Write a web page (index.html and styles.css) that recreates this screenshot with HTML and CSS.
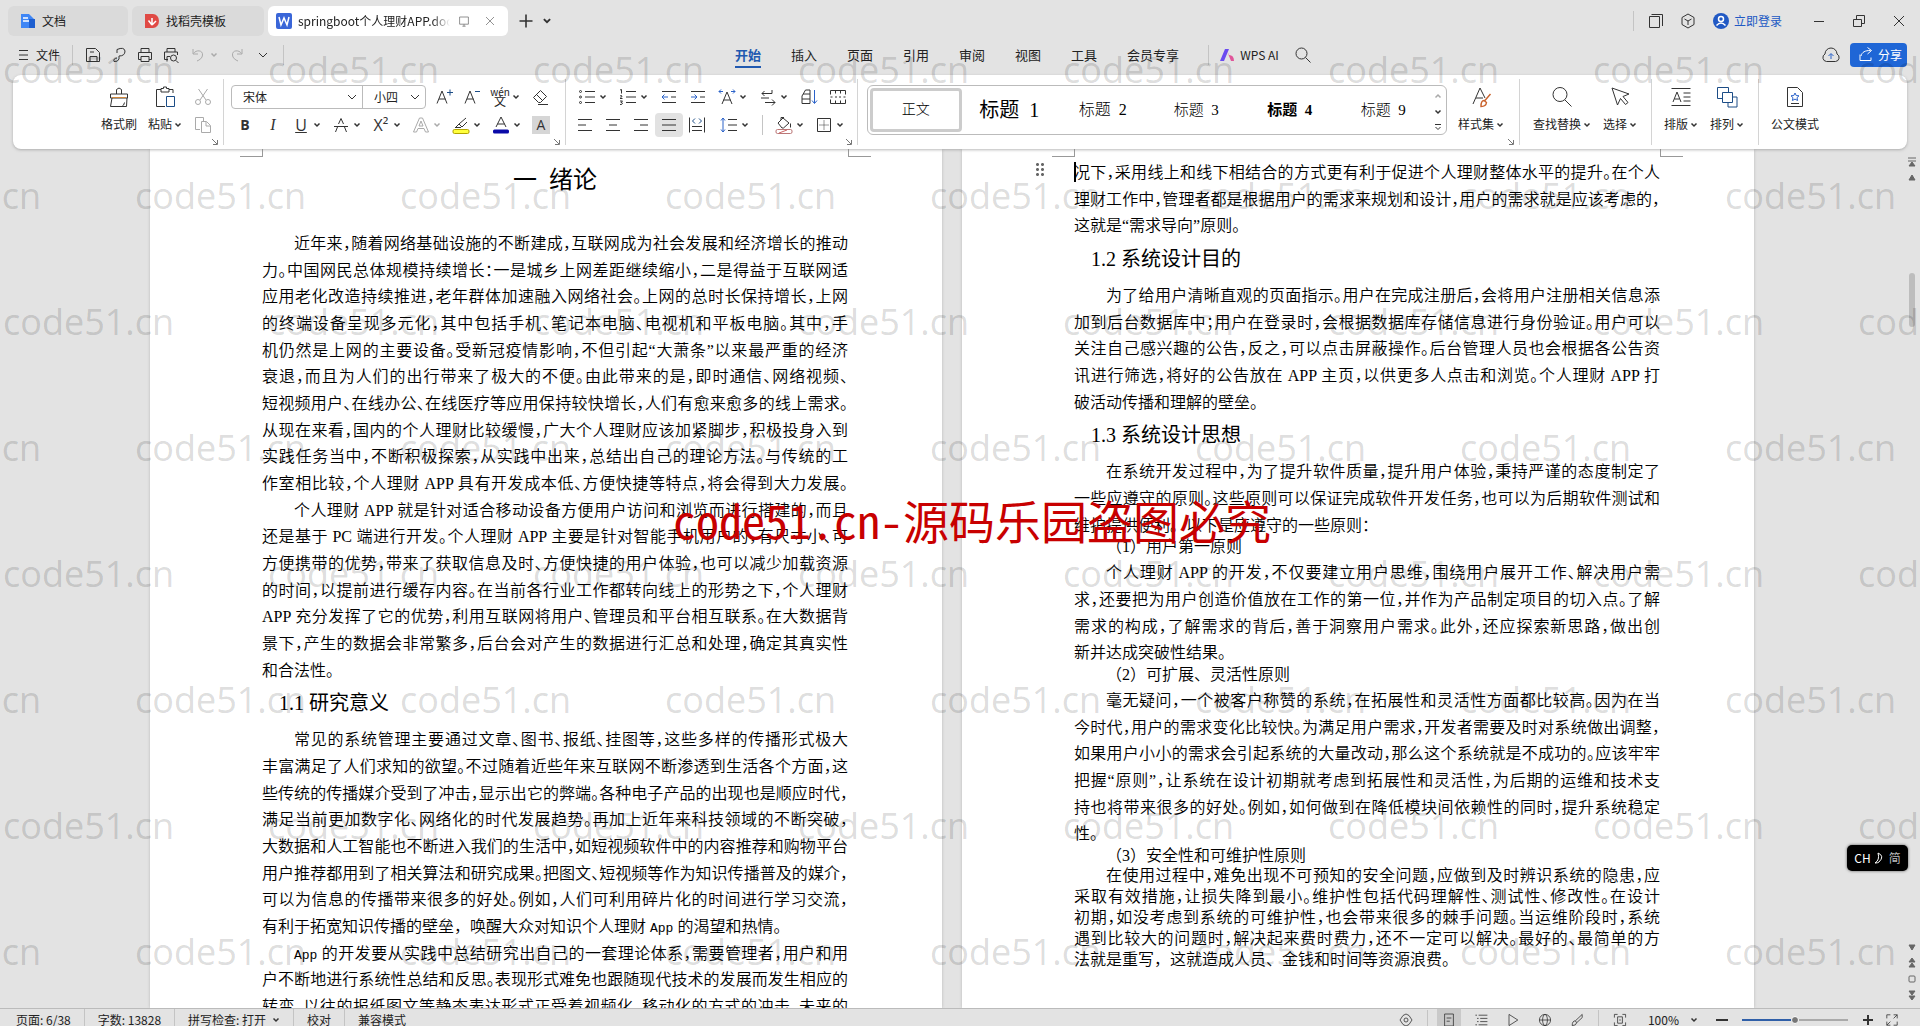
FILE: index.html
```html
<!DOCTYPE html>
<html lang="zh-CN">
<head>
<meta charset="utf-8">
<title>springboot个人理财APP.docx</title>
<link rel="stylesheet" href="styles.css">
</head>
<body>
<svg class="defs" aria-hidden="true">
  <symbol id="caret" viewBox="0 0 8 8"><path d="M1.5 2.5 4 5l2.500-2.500" stroke-width="1.500"/></symbol>
  <symbol id="chev" viewBox="0 0 12 12"><path d="m2 4 4 4 4-4"/></symbol>
  <symbol id="launch" viewBox="0 0 8 8"><path d="m1 1 5 5M6.500 2v4.500H2"/></symbol>
  <symbol id="burger" viewBox="0 0 20 20"><path d="M5 5.500h9M5 10h9M5 14.500h9"/></symbol>
  <symbol id="save" viewBox="0 0 20 20"><path d="M3.500 3.500h9l4 4v9h-13zM7 16.500v-5h7v5M7 7h4"/></symbol>
  <symbol id="output" viewBox="0 0 20 20"><path d="M8 8V4.500q7-3 8 1.500 0 5-6 5v3q-1 3-5 2.500-1-3 3-3.500"/></symbol>
  <symbol id="print" viewBox="0 0 20 20"><path d="M6 7.500v-4h8v4M6 14.500H3.500v-7h13v7H14M6 11.500h8v5H6z"/></symbol>
  <symbol id="preview" viewBox="0 0 20 20"><path d="M6 7v-3.500h8V7M7 14.500H3.500V7h13v3M6 16.500v-5h3"/><circle cx="12.500" cy="13" r="3"/><path d="m15 15.500 2.500 2.500"/></symbol>
  <symbol id="undo" viewBox="0 0 20 20"><path d="M5 4v5h5M5.500 8.500C8 4.500 15 5 14.500 10c0 3-3 5-5.500 6"/></symbol>
  <symbol id="redo" viewBox="0 0 20 20"><path d="M15 4v5h-5M14.500 8.500C12 4.500 5 5 5.500 10c0 3 3 5 5.500 6"/></symbol>
  <symbol id="search" viewBox="0 0 20 20"><circle cx="8.500" cy="8.500" r="5.500"/><path d="m12.500 12.500 5 5"/></symbol>
  <symbol id="plus" viewBox="0 0 20 20"><path d="M10 3.500v13M3.500 10h13" stroke-width="1.600"/></symbol>
  <symbol id="close" viewBox="0 0 20 20"><path d="m5 5 10 10M15 5 5 15"/></symbol>
  <symbol id="min" viewBox="0 0 20 20"><path d="M5 10.500h10"/></symbol>
  <symbol id="restore" viewBox="0 0 20 20"><path d="M4.500 8.500h8v7h-8zM7.500 8.500v-4h8v8h-3"/></symbol>
  <symbol id="doc2" viewBox="0 0 20 20"><path d="M3.500 5.500h10v11h-10zM5.500 3.500h11v11.500"/></symbol>
  <symbol id="cube" viewBox="0 0 20 20"><path d="m10 3 6 3.500v7L10 17l-6-3.500v-7zM6.500 8l3.500 2 3.500-2M10 10v4"/></symbol>
  <symbol id="monitor" viewBox="0 0 20 20"><path d="M4.500 5h11v9h-11zM8 16.500h4M10 14v2.500"/></symbol>
  <symbol id="cloud" viewBox="0 0 20 20"><path d="M5.500 16.500a4 4 0 0 1-1.500-7.500 6 6 0 0 1 12 0 4 4 0 0 1-1.500 7.500z"/><path class="blue" d="M10 14V9M7.500 11 10 8.500l2.500 2.500"/></symbol>
  <symbol id="share" viewBox="0 0 20 20"><path d="M4 9.500v6h11v-3M5 11c1-4 4-5.500 9.500-5.500M11.500 2.500l4 3-4 3.500"/></symbol>
  <symbol id="brushpot" viewBox="0 0 24 24"><path d="M9.500 9V4.500q2.500-3 5 0V9M3.500 9h17v4h-17zM5 13l-1.500 8.500h16L20 13M15 21.500q2-1 2.500-4"/><path d="M5 12.500h14" stroke="#d0873a"/></symbol>
  <symbol id="paste" viewBox="0 0 24 24"><path d="M8 4.500H3.500v17H12M16 4.500h4V8M8 7V3.500h2.500V2h3v1.500H16V7z"/><path class="navy" d="M13.500 11.500h8v10h-8z"/></symbol>
  <symbol id="cut" viewBox="0 0 20 20"><path d="m5.500 2 7.500 11M14.500 2 7 13"/><circle cx="5" cy="15" r="2.500"/><circle cx="15" cy="15" r="2.500"/></symbol>
  <symbol id="copy" viewBox="0 0 20 20"><path d="M7 14.500H2.500v-12h8V6M8.500 6.500h5l4 4v7h-9zM13 7v4h4"/></symbol>
  <symbol id="aplus" viewBox="0 0 20 20"><path d="M3 16.500 8 4l5 12.500M5 12h6.500"/><path class="navy" d="M13 5.500h6M16 2.500v6"/></symbol>
  <symbol id="aminus" viewBox="0 0 20 20"><path d="M3 16.500 8 4l5 12.500M5 12h6.500"/><path class="navy" d="M13 4.500h5"/></symbol>
  <symbol id="eraser" viewBox="0 0 20 20"><path d="m3.500 10.500 7-7 6 6-6 6H8.500zM6.500 7.500l6 6M8 17.500h10"/></symbol>
  <symbol id="strike" viewBox="0 0 20 20"><path d="M3 11.500h14M7.500 9 10 3.500 12.500 9M4.500 17 6.500 12M15.500 17l-2-5"/></symbol>
  <symbol id="aout" viewBox="0 0 20 20"><path d="M2.500 17 8.500 3h3l6 14h-3L13 13.500H7L5.500 17zM8 11h4l-2-5z"/></symbol>
  <symbol id="hilite" viewBox="0 0 20 20"><path d="m5 12 3-3 7-6M8 9l3 3 5-5M4 12.500h6"/><rect x="2" y="14.500" width="16" height="4" rx="1.500" fill="#ffff3c" stroke="#b3a400"/></symbol>
  <symbol id="fcolor" viewBox="0 0 20 20"><path d="M5 12 10 2l5 10M6.500 9h7"/><rect x="2" y="14.500" width="16" height="4" rx="1.500" fill="#0a0aa8" stroke="none"/></symbol>
  <symbol id="bullets" viewBox="0 0 20 20"><path d="M8 4.500h10M8 10h10M8 15.500h10"/><circle cx="3.500" cy="4.500" r="1"/><circle cx="3.500" cy="10" r="1"/><circle cx="3.500" cy="15.500" r="1"/></symbol>
  <symbol id="numbers" viewBox="0 0 20 20"><path d="M8 4.500h10M8 10h10M8 15.500h10M2 3l1.500-.5v4M2 9q2-1 2 0t-2 2.500h2.500M2 14h2.500L3 15.500q1.500 0 1.500 1t-2.500 1"/></symbol>
  <symbol id="outdent" viewBox="0 0 20 20"><path d="M3 4.500h14M12 10h5M3 15.500h14"/><path class="blue" d="M3 10h6M5.500 7.500 3 10l2.500 2.500"/></symbol>
  <symbol id="indent" viewBox="0 0 20 20"><path d="M3 4.500h14M12 10h5M3 15.500h14"/><path class="blue" d="M3 10h6M6.500 7.500 9 10l-2.500 2.500"/></symbol>
  <symbol id="awide" viewBox="0 0 20 20"><path d="m5 17 5-12 5 12M6.500 13h7"/><path class="blue" d="M6 4.500H2M4 2.500l-2 2 2 2M14 4.500h4M16 2.500l2 2-2 2"/></symbol>
  <symbol id="swap" viewBox="0 0 20 20"><path d="M14 3v3.500H4M6.500 4 4 6.500 6.500 9M3 11h8M7 15.500h10M14 12.500l3 3-3 3"/></symbol>
  <symbol id="sort" viewBox="0 0 20 20"><path d="M3 9 6.500 3H11v6M4 7h7M3 16.500V12h8v4.500H3M3 9v3M11 9v3"/><path class="blue" d="M15.500 3v13M13 13.500l2.500 3 2.500-3"/></symbol>
  <symbol id="tabs" viewBox="0 0 20 20"><path d="M2.500 7.500v-4h15v4M2.500 12.500v4h15v-4M7.500 3.500v3M12.500 3.500v3M7.500 13.500v3M12.500 13.500v3M2.500 10h2M7 10h2M11 10h2M15.500 10h2"/></symbol>
  <symbol id="al" viewBox="0 0 20 20"><path d="M3 4.500h14M3 10h8M3 15.500h14"/></symbol>
  <symbol id="ac" viewBox="0 0 20 20"><path d="M3 4.500h14M6 10h8M3 15.500h14"/></symbol>
  <symbol id="ar" viewBox="0 0 20 20"><path d="M3 4.500h14M9 10h8M3 15.500h14"/></symbol>
  <symbol id="aj" viewBox="0 0 20 20"><path d="M3 4.500h14M3 10h14M3 15.500h14"/></symbol>
  <symbol id="dist" viewBox="0 0 20 20"><path d="M2.500 2.500v15M17.500 2.500v15M5 11.500h10M5 15.500h10"/><path class="navy" d="M8 3.500 5.500 6 8 8.500M12 3.500 14.500 6 12 8.500"/></symbol>
  <symbol id="lh" viewBox="0 0 20 20"><path d="M9 4.500h9M9 10h9M9 15.500h9"/><path class="blue" d="M4 3v14M2 5.500 4 3l2 2.500M2 14.500 4 17l2-2.500"/></symbol>
  <symbol id="fill" viewBox="0 0 20 20"><path d="m4 8 5-5 6 5-5.500 5H8zM7 5V2.500h3M16.500 8.500v4"/><rect x="2" y="14.500" width="16" height="4" rx="1.500" fill="#fff" stroke="#b77"/><path d="m5 18 8-3" stroke="#c66"/></symbol>
  <symbol id="border" viewBox="0 0 20 20"><path d="M3.500 3.500h13v13h-13z"/><path d="M10 5.500v9M5.500 10h9" stroke-dasharray="1 1"/></symbol>
  <symbol id="styleset" viewBox="0 0 24 24"><path d="m4 19 7-16 5 10M7 13h7"/><path d="m21.500 9-6 7M15 15.500q-3 0-3 6 5 0 5.500-4z" stroke="#c9622c" stroke-width="1.400"/></symbol>
  <symbol id="bigfind" viewBox="0 0 24 24"><circle cx="10" cy="9.500" r="7"/><path d="m15 15 6.500 6.500"/></symbol>
  <symbol id="pointer" viewBox="0 0 24 24"><path d="m4 3 5.500 17 3-6.500 5 6 2.500-2-5-6 6-2.500z"/></symbol>
  <symbol id="layout" viewBox="0 0 24 24"><path d="M2.500 3.500h19M2.500 20.500h19M4 17 8 7l4 10M5.500 14h5M14.500 8h7M14.500 12h7M14.500 16h7"/></symbol>
  <symbol id="arrange" viewBox="0 0 24 24"><path class="navy" d="M7 13.500H2.500v-11h11V7M7.500 7.500h10v10h-10zM18 12h4v10h-9v-4"/></symbol>
  <symbol id="official" viewBox="0 0 24 24"><path d="M4.500 2.500h10l5 5v14h-15zM8 18.500h8"/><path class="blue" d="m12 8 1.200 2.500 2.800.3-2 1.900.6 2.800-2.600-1.400-2.600 1.400.6-2.800-2-1.900 2.800-.3z"/></symbol>
  <symbol id="eye" viewBox="0 0 20 20"><path d="M2.500 10q7.500-15 15 0-7.500 15-15 0z"/><circle cx="10" cy="10" r="2.500"/></symbol>
  <symbol id="pageview" viewBox="0 0 20 20"><path d="M4.500 2.500h11v15h-11zM7 7.500h6M7 11.500h4"/></symbol>
  <symbol id="outline" viewBox="0 0 20 20"><path d="M3 4h2M7 4h11M5 8h2M9 8h9M5 12h2M9 12h9M3 16h2M7 16h11"/></symbol>
  <symbol id="play" viewBox="0 0 20 20"><path d="m5 3 11 7-11 7z"/></symbol>
  <symbol id="globe" viewBox="0 0 20 20"><circle cx="10" cy="10" r="7"/><ellipse cx="10" cy="10" rx="3" ry="7"/><path d="M3 10h14"/></symbol>
  <symbol id="pen" viewBox="0 0 20 20"><path d="m16.500 3-8.500 8 1.500 2.500 7-6.500zM8 11q-4 0-4 6 5 0 5.500-3.500"/></symbol>
  <symbol id="fit" viewBox="0 0 20 20"><path d="M3 7V3h4M13 3h4v4M17 13v4h-4M7 17H3v-4M7 6h6v8H7zM9 10h2"/></symbol>
  <symbol id="full" viewBox="0 0 20 20"><path d="M3.500 8V3.500H8M12 3.500h4.500V8M16.500 12v4.500H12M8 16.500H3.500V12M3.500 16.500 8 12M16.500 3.500 12 8"/></symbol>
</svg>

<header class="titlebar">
  <div class="tabs">
    <button class="tab tab-home"><svg class="logo" viewBox="0 0 16 16"><path d="M1 1h8l6 6v8H1z" fill="#3f86f5"/><path d="M9 6h6v9H9z" fill="#1e5fd0"/><path d="M3 5h5M3 8h6" stroke="#fff" stroke-width="1.500"/></svg>文档</button>
    <button class="tab tab-find"><svg class="logo" viewBox="0 0 16 16"><path d="M1 1h8a6 7 0 0 1 0 14H1z" fill="#e04a45"/><path d="M8 12V5M8 12 4.500 7.500M8 12l4-4" stroke="#fff" stroke-width="1.500" fill="none"/></svg>找稻壳模板</button>
    <div class="tab tab-active"><svg class="logo" viewBox="0 0 16 16"><rect width="16" height="16" rx="2" fill="#3a66d8"/><path d="m3 4 2 8 3-7 3 7 2-8" stroke="#fff" stroke-width="1.500" fill="none"/></svg><span class="name">springboot个人理财APP.docx</span><svg class="i16 dim"><use href="#monitor"/></svg><button class="bare" aria-label="关闭标签"><svg class="i16 dim"><use href="#close"/></svg></button></div>
  </div>
  <button class="bare plus" aria-label="新建"><svg class="i20"><use href="#plus"/></svg></button>
  <button class="bare" aria-label="标签列表"><svg class="i10"><use href="#caret"/></svg></button>
  <div class="winctl">
    <i class="vline"></i>
    <button class="bare" aria-label="窗口"><svg class="i20"><use href="#doc2"/></svg></button>
    <button class="bare" aria-label="应用"><svg class="i20"><use href="#cube"/></svg></button>
    <button class="bare login"><svg class="i16" viewBox="0 0 16 16"><circle cx="8" cy="8" r="8" fill="#2159c4" stroke="none"/><circle cx="8" cy="6" r="2.500" stroke="#fff" stroke-width="1.500"/><path d="M3.500 12.500q4.500-5 9 0" stroke="#fff" stroke-width="1.500"/></svg>立即登录</button>
    <button class="bare win" aria-label="最小化"><svg class="i20"><use href="#min"/></svg></button>
    <button class="bare win" aria-label="还原"><svg class="i20"><use href="#restore"/></svg></button>
    <button class="bare win" aria-label="关闭"><svg class="i20"><use href="#close"/></svg></button>
  </div>
</header>

<div class="menubar">
  <div class="quick">
    <button class="bare file"><svg class="i20"><use href="#burger"/></svg>文件</button>
    <i class="vline"></i>
    <button class="bare q" aria-label="保存"><svg class="i20"><use href="#save"/></svg></button>
    <button class="bare q" aria-label="输出"><svg class="i20"><use href="#output"/></svg></button>
    <button class="bare q" aria-label="打印"><svg class="i20"><use href="#print"/></svg></button>
    <button class="bare q" aria-label="打印预览"><svg class="i20"><use href="#preview"/></svg></button>
    <button class="bare dd off" aria-label="撤销"><svg class="i20"><use href="#undo"/></svg><svg class="i8"><use href="#caret"/></svg></button>
    <button class="bare q off" aria-label="恢复"><svg class="i20"><use href="#redo"/></svg></button>
    <button class="bare q" aria-label="更多"><svg class="i12"><use href="#chev"/></svg></button>
    <i class="vline"></i>
  </div>
  <nav class="menu">
    <button class="on">开始</button><button>插入</button><button>页面</button><button>引用</button><button>审阅</button><button>视图</button><button>工具</button><button>会员专享</button>
  </nav>
  <i class="vline"></i>
  <button class="bare ai"><svg class="i16" viewBox="0 0 16 16"><path d="M1 14 6 2h4L5 14z" fill="#6a4cf0" stroke="none"/><path d="m8 4 4 10h3q0-6-5-6z" fill="#e0559a" stroke="none"/></svg>WPS AI</button>
  <button class="bare" aria-label="搜索"><svg class="i20"><use href="#search"/></svg></button>
  <div class="right">
    <button class="bare" aria-label="云同步"><svg class="i20"><use href="#cloud"/></svg></button>
    <button class="share"><svg class="i20"><use href="#share"/></svg>分享</button>
  </div>
</div>

<section class="ribbon">
  <div class="group clip">
    <button class="big w44"><svg class="i24"><use href="#brushpot"/></svg><span>格式刷</span></button>
    <button class="big w44"><svg class="i24"><use href="#paste"/></svg><span>粘贴<svg class="i8"><use href="#caret"/></svg></span></button>
    <div class="rows">
      <button class="ic off" aria-label="剪切"><svg class="i20"><use href="#cut"/></svg></button>
      <button class="ic off" aria-label="复制"><svg class="i20"><use href="#copy"/></svg></button>
    </div>
    <svg class="launch"><use href="#launch"/></svg>
  </div>
  <div class="group font">
    <div class="rows">
      <div class="row">
        <div class="selects">
          <label class="pick face"><select aria-label="字体"><option>宋体</option></select><svg class="i12"><use href="#chev"/></svg></label>
          <label class="pick size"><select aria-label="字号"><option>小四</option></select><svg class="i12"><use href="#chev"/></svg></label>
        </div>
        <button class="ic" aria-label="增大字号"><svg class="i20"><use href="#aplus"/></svg></button>
        <button class="ic" aria-label="减小字号"><svg class="i20"><use href="#aminus"/></svg></button>
        <button class="dd" aria-label="拼音指南"><span class="wen"><small>wén</small>文</span><svg class="i8"><use href="#caret"/></svg></button>
        <button class="ic" aria-label="清除格式"><svg class="i20"><use href="#eraser"/></svg></button>
      </div>
      <div class="row">
        <button class="ic ltr b">B</button>
        <button class="ic ltr it">I</button>
        <button class="dd ltr"><span class="u">U</span><svg class="i8"><use href="#caret"/></svg></button>
        <button class="dd" aria-label="删除线"><svg class="i20"><use href="#strike"/></svg><svg class="i8"><use href="#caret"/></svg></button>
        <button class="dd ltr"><span>X²</span><svg class="i8"><use href="#caret"/></svg></button>
        <button class="dd off" aria-label="文字效果"><svg class="i20"><use href="#aout"/></svg><svg class="i8"><use href="#caret"/></svg></button>
        <button class="dd" aria-label="突出显示"><svg class="i20"><use href="#hilite"/></svg><svg class="i8"><use href="#caret"/></svg></button>
        <button class="dd" aria-label="字体颜色"><svg class="i20"><use href="#fcolor"/></svg><svg class="i8"><use href="#caret"/></svg></button>
        <button class="ic ltr"><span class="shade">A</span></button>
      </div>
    </div>
    <svg class="launch"><use href="#launch"/></svg>
  </div>
  <div class="group para">
    <div class="rows">
      <div class="row spread">
        <button class="dd" aria-label="项目符号"><svg class="i20"><use href="#bullets"/></svg><svg class="i8"><use href="#caret"/></svg></button>
        <button class="dd" aria-label="编号"><svg class="i20"><use href="#numbers"/></svg><svg class="i8"><use href="#caret"/></svg></button>
        <button class="ic" aria-label="减少缩进"><svg class="i20"><use href="#outdent"/></svg></button>
        <button class="ic" aria-label="增加缩进"><svg class="i20"><use href="#indent"/></svg></button>
        <button class="dd" aria-label="中文版式"><svg class="i20"><use href="#awide"/></svg><svg class="i8"><use href="#caret"/></svg></button>
        <button class="dd" aria-label="换行"><svg class="i20"><use href="#swap"/></svg><svg class="i8"><use href="#caret"/></svg></button>
        <button class="ic" aria-label="排序"><svg class="i20"><use href="#sort"/></svg></button>
        <button class="ic" aria-label="制表位"><svg class="i20"><use href="#tabs"/></svg></button>
      </div>
      <div class="row">
        <button class="ic" aria-label="左对齐"><svg class="i20"><use href="#al"/></svg></button>
        <button class="ic" aria-label="居中"><svg class="i20"><use href="#ac"/></svg></button>
        <button class="ic" aria-label="右对齐"><svg class="i20"><use href="#ar"/></svg></button>
        <button class="ic pressed" aria-label="两端对齐"><svg class="i20"><use href="#aj"/></svg></button>
        <button class="ic" aria-label="分散对齐"><svg class="i20"><use href="#dist"/></svg></button>
        <button class="dd lead" aria-label="行距"><svg class="i20"><use href="#lh"/></svg><svg class="i8"><use href="#caret"/></svg></button>
        <i class="vline"></i>
        <button class="dd" aria-label="底纹"><svg class="i20"><use href="#fill"/></svg><svg class="i8"><use href="#caret"/></svg></button>
        <button class="dd" aria-label="边框"><svg class="i20"><use href="#border"/></svg><svg class="i8"><use href="#caret"/></svg></button>
      </div>
    </div>
    <svg class="launch"><use href="#launch"/></svg>
  </div>
  <div class="group styles">
    <div class="gallery">
      <button class="style sel">正文</button>
      <button class="style h1">标题 &nbsp;1</button>
      <button class="style h2">标题 &nbsp;2</button>
      <button class="style">标题 &nbsp;3</button>
      <button class="style h4">标题 &nbsp;4</button>
      <button class="style">标题 &nbsp;9</button>
      <div class="spin"><svg class="i8 off flip"><use href="#caret"/></svg><svg class="i8"><use href="#caret"/></svg><svg class="i8" viewBox="0 0 8 8"><path d="M1 1.500h6M1.500 4 4 6.500 6.500 4"/></svg></div>
    </div>
    <button class="big w60"><svg class="i24"><use href="#styleset"/></svg><span>样式集<svg class="i8"><use href="#caret"/></svg></span></button>
    <svg class="launch"><use href="#launch"/></svg>
  </div>
  <div class="group find">
    <button class="big w68"><svg class="i24"><use href="#bigfind"/></svg><span>查找替换<svg class="i8"><use href="#caret"/></svg></span></button>
    <button class="big w44"><svg class="i24"><use href="#pointer"/></svg><span>选择<svg class="i8"><use href="#caret"/></svg></span></button>
  </div>
  <div class="group arrange">
    <button class="big w44"><svg class="i24"><use href="#layout"/></svg><span>排版<svg class="i8"><use href="#caret"/></svg></span></button>
    <button class="big w44"><svg class="i24"><use href="#arrange"/></svg><span>排列<svg class="i8"><use href="#caret"/></svg></span></button>
  </div>
  <div class="group last">
    <button class="big w60"><svg class="i24"><use href="#official"/></svg><span>公文模式</span></button>
  </div>
</section>

<main class="canvas">
  <div class="pages">
    <article class="page">
      <i class="corner tl"></i><i class="corner tr"></i>
      <h1>一 &nbsp;绪论</h1>
      <p><span>近年来，随着网络基础设施的不断建成，互联网成为社会发展和经济增长的推动</span><span>力。中国网民总体规模持续增长：一是城乡上网差距继续缩小，二是得益于互联网适</span><span>应用老化改造持续推进，老年群体加速融入网络社会。上网的总时长保持增长，上网</span><span>的终端设备呈现多元化，其中包括手机、笔记本电脑、电视机和平板电脑。其中，手</span><span>机仍然是上网的主要设备。受新冠疫情影响，不但引起“大萧条”以来最严重的经济</span><span>衰退，而且为人们的出行带来了极大的不便。由此带来的是，即时通信、网络视频、</span><span>短视频用户、在线办公、在线医疗等应用保持较快增长，人们有愈来愈多的线上需求。</span><span>从现在来看，国内的个人理财比较缓慢，广大个人理财应该加紧脚步，积极投身入到</span><span>实践任务当中，不断积极探索，从实践中出来，总结出自己的理论方法。与传统的工</span><span class="fit">作室相比较，个人理财 APP 具有开发成本低、方便快捷等特点，将会得到大力发展。</span></p>
      <p><span>个人理财 APP 就是针对适合移动设备方便用户访问和浏览而进行搭建的，而且</span><span>还是基于 PC 端进行开发。个人理财 APP 主要是针对智能手机用户的，有尺寸小、可</span><span>方便携带的优势，带来了获取信息及时、方便快捷的用户体验，也可以减少加载资源</span><span>的时间，以提前进行缓存内容。在当前各行业工作都转向线上的形势之下，个人理财</span><span>APP 充分发挥了它的优势，利用互联网将用户、管理员和平台相互联系。在大数据背</span><span>景下，产生的数据会非常繁多，后台会对产生的数据进行汇总和处理，确定其真实性</span><span>和合法性。</span></p>
      <h2>1.1 研究意义</h2>
      <p><span>常见的系统管理主要通过文章、图书、报纸、挂图等，这些多样的传播形式极大</span><span>丰富满足了人们求知的欲望。不过随着近些年来互联网不断渗透到生活各个方面，这</span><span>些传统的传播媒介受到了冲击，显示出它的弊端。各种电子产品的出现也是顺应时代，</span><span>满足当前更加数字化、网络化的时代发展趋势。再加上近年来科技领域的不断突破，</span><span>大数据和人工智能也不断进入我们的生活中，如短视频软件中的内容推荐和购物平台</span><span>用户推荐都用到了相关算法和研究成果。把图文、短视频等作为知识传播普及的媒介，</span><span>可以为信息的传播带来很多的好处。例如，人们可利用碎片化的时间进行学习交流，</span><span>有利于拓宽知识传播的壁垒，唤醒大众对知识个人理财 <code>App</code> 的渴望和热情。</span></p>
      <p><span><code>App</code> 的开发要从实践中总结研究出自己的一套理论体系，需要管理者，用户和用</span><span>户不断地进行系统性总结和反思。表现形式难免也跟随现代技术的发展而发生相应的</span><span class="fit">转变，以往的报纸图文等静态表达形式正受着视频化、移动化的方式的冲击，未来的</span></p>
    </article>
    <article class="page">
      <i class="corner tl"></i><i class="corner tr"></i><i class="grip"></i><i class="cursor"></i>
      <p class="cont"><span>况下，采用线上和线下相结合的方式更有利于促进个人理财整体水平的提升。在个人</span><span>理财工作中，管理者都是根据用户的需求来规划和设计，用户的需求就是应该考虑的，</span><span>这就是“需求导向”原则。</span></p>
      <h2>1.2 系统设计目的</h2>
      <p><span>为了给用户清晰直观的页面指示。用户在完成注册后，会将用户注册相关信息添</span><span>加到后台数据库中；用户在登录时，会根据数据库存储信息进行身份验证。用户可以</span><span>关注自己感兴趣的公告，反之，可以点击屏蔽操作。后台管理人员也会根据各公告资</span><span>讯进行筛选，将好的公告放在 APP 主页，以供更多人点击和浏览。个人理财 APP 打</span><span>破活动传播和理解的壁垒。</span></p>
      <h2>1.3 系统设计思想</h2>
      <p><span>在系统开发过程中，为了提升软件质量，提升用户体验，秉持严谨的态度制定了</span><span>一些应遵守的原则。这些原则可以保证完成软件开发任务，也可以为后期软件测试和</span><span>维护提供便利。以下是应遵守的一些原则：</span></p>
      <h3>（1）用户第一原则</h3>
      <p><span>个人理财 APP 的开发，不仅要建立用户思维，围绕用户展开工作、解决用户需</span><span>求，还要把为用户创造价值放在工作的第一位，并作为产品制定项目的切入点。了解</span><span>需求的构成，了解需求的背后，善于洞察用户需求。此外，还应探索新思路，做出创</span><span>新并达成突破性结果。</span></p>
      <h3>（2）可扩展、灵活性原则</h3>
      <p><span>毫无疑问，一个被客户称赞的系统，在拓展性和灵活性方面都比较高。因为在当</span><span>今时代，用户的需求变化比较快。为满足用户需求，开发者需要及时对系统做出调整，</span><span>如果用户小小的需求会引起系统的大量改动，那么这个系统就是不成功的。应该牢牢</span><span>把握“原则”，让系统在设计初期就考虑到拓展性和灵活性，为后期的运维和技术支</span><span>持也将带来很多的好处。例如，如何做到在降低模块间依赖性的同时，提升系统稳定</span><span>性。</span></p>
      <h3>（3）安全性和可维护性原则</h3>
      <p class="tight"><span>在使用过程中，难免出现不可预知的安全问题，应做到及时辨识系统的隐患，应</span><span>采取有效措施，让损失降到最小。维护性包括代码理解性、测试性、修改性。在设计</span><span>初期，如没考虑到系统的可维护性，也会带来很多的棘手问题。当运维阶段时，系统</span><span>遇到比较大的问题时，解决起来费时费力，还不一定可以解决。最好的、最简单的方</span><span>法就是重写，这就造成人员、金钱和时间等资源浪费。</span></p>
    </article>
  </div>
  <div class="scroll">
    <svg class="mark" viewBox="0 0 10 10"><path d="M1 1h8M1 4h8M2 9l3-4 3 4z"/></svg>
    <svg class="mark" viewBox="0 0 10 10"><path d="m5 2 3 5H2z"/></svg>
    <i class="thumb"></i>
    <svg class="mark down" viewBox="0 0 10 10"><path d="M2 3h6L5 8z"/></svg>
    <svg class="mark" viewBox="0 0 10 10"><path d="m5 0 3 4H2zM5 5l3 4H2z"/></svg>
    <svg class="mark ring" viewBox="0 0 10 10"><rect x="2" y="2" width="6" height="6" rx="1"/></svg>
    <svg class="mark" viewBox="0 0 10 10"><path d="M5 5 2 1h6zM5 10 2 6h6z"/></svg>
  </div>
</main>

<footer class="status">
  <button class="bare">页面: 6/38</button><i class="vline"></i>
  <button class="bare">字数: 13828</button><i class="vline"></i>
  <button class="bare">拼写检查: 打开<svg class="i8 proof"><use href="#caret"/></svg></button><i class="vline"></i>
  <button class="bare">校对</button><i class="vline"></i>
  <button class="bare">兼容模式</button>
  <div class="views">
    <button class="bare v" aria-label="护眼"><svg class="i16"><use href="#eye"/></svg></button><i class="vline"></i>
    <button class="bare v cur" aria-label="页面视图"><svg class="i16"><use href="#pageview"/></svg></button>
    <button class="bare v" aria-label="大纲"><svg class="i16"><use href="#outline"/></svg></button>
    <button class="bare v" aria-label="阅读"><svg class="i16"><use href="#play"/></svg></button>
    <button class="bare v" aria-label="网页"><svg class="i16"><use href="#globe"/></svg></button>
    <button class="bare v" aria-label="写作"><svg class="i16"><use href="#pen"/></svg></button><i class="vline"></i>
    <button class="bare v" aria-label="适合页宽"><svg class="i16"><use href="#fit"/></svg></button>
    <button class="bare zoom">100%<svg class="i8 gap"><use href="#caret"/></svg></button>
    <button class="bare pm" aria-label="缩小"><svg class="i16 thick" viewBox="0 0 16 16"><path d="M2 8h12"/></svg></button>
    <input type="range" class="slider" min="0" max="100" value="50" aria-label="缩放">
    <button class="bare pm" aria-label="放大"><svg class="i16 thick" viewBox="0 0 16 16"><path d="M3 8h10M8 3v10"/></svg></button>
    <button class="bare v" aria-label="全屏"><svg class="i16"><use href="#full"/></svg></button>
  </div>
</footer>

<div class="ime">CH<svg class="i12" viewBox="0 0 12 12"><path d="M4 1q7 3 1 9-1 1-4 1 5-3 3-10z"/></svg><b>简</b></div>

<div class="wm" aria-hidden="true">
  <div><span>code51.cn</span><span>code51.cn</span><span>code51.cn</span><span>code51.cn</span><span>code51.cn</span><span>code51.cn</span><span>code51.cn</span><span>code51.cn</span></div>
  <div><span>code51.cn</span><span>code51.cn</span><span>code51.cn</span><span>code51.cn</span><span>code51.cn</span><span>code51.cn</span><span>code51.cn</span><span>code51.cn</span></div>
  <div><span>code51.cn</span><span>code51.cn</span><span>code51.cn</span><span>code51.cn</span><span>code51.cn</span><span>code51.cn</span><span>code51.cn</span><span>code51.cn</span></div>
  <div><span>code51.cn</span><span>code51.cn</span><span>code51.cn</span><span>code51.cn</span><span>code51.cn</span><span>code51.cn</span><span>code51.cn</span><span>code51.cn</span></div>
  <div><span>code51.cn</span><span>code51.cn</span><span>code51.cn</span><span>code51.cn</span><span>code51.cn</span><span>code51.cn</span><span>code51.cn</span><span>code51.cn</span></div>
  <div><span>code51.cn</span><span>code51.cn</span><span>code51.cn</span><span>code51.cn</span><span>code51.cn</span><span>code51.cn</span><span>code51.cn</span><span>code51.cn</span></div>
  <div><span>code51.cn</span><span>code51.cn</span><span>code51.cn</span><span>code51.cn</span><span>code51.cn</span><span>code51.cn</span><span>code51.cn</span><span>code51.cn</span></div>
  <div><span>code51.cn</span><span>code51.cn</span><span>code51.cn</span><span>code51.cn</span><span>code51.cn</span><span>code51.cn</span><span>code51.cn</span><span>code51.cn</span></div>
</div>
<div class="notice">code51.cn-源码乐园盗图必究</div>
</body>
</html>
```
FILE: styles.css
```css
* { box-sizing: border-box; }
body {
  margin: 0;
  height: 100vh;
  overflow: hidden;
  display: flex;
  flex-direction: column;
  position: relative;
  background: #e3e3e3;
  color: #222;
  font: 12px/16px "Noto Sans CJK SC", sans-serif;
}
button, select, input { font: inherit; color: inherit; }
button { border: 0; padding: 0; background: none; }
svg { fill: none; stroke: #333; flex: none; }
.blue { stroke: #2a62c9; }
.navy { stroke: #1c4d86; }
.off svg, svg.off { stroke: #aaa; }
svg.dim { stroke: #777; }
.defs { position: absolute; width: 0; height: 0; }
.i8 { width: 8px; height: 8px; }
.i10 { width: 10px; height: 10px; }
.i12 { width: 12px; height: 12px; }
.i16 { width: 16px; height: 16px; }
.i20 { width: 20px; height: 20px; }
.i24 { width: 24px; height: 24px; }
.flip { transform: rotate(180deg); }
.bare { display: flex; align-items: center; white-space: nowrap; }
.vline { width: 1px; height: 20px; background: #c4c4c4; flex: none; }

/* title bar */
.titlebar { display: flex; align-items: center; height: 41px; padding-left: 8px; flex: none; }
.tabs { display: flex; gap: 4px; }
.tab {
  display: flex;
  align-items: center;
  gap: 6px;
  height: 30px;
  padding: 0 12px;
  border-radius: 6px;
  background: #dadada;
}
.logo { width: 16px; height: 16px; stroke: none; }
.tab-home { width: 120px; }
.tab-find { width: 132px; }
.tab-active { width: 240px; padding: 0 10px 0 8px; background: #fff; }
.name { flex: 1; overflow: hidden; white-space: nowrap; mask-image: linear-gradient(90deg, #000 88%, transparent); }
.tab-active .bare { margin-left: 4px; }
.plus { margin: 0 6px 0 8px; }
.winctl { margin-left: auto; display: flex; align-items: center; gap: 12px; padding-right: 11px; }
.login { gap: 5px; color: #2159c4; margin: 0 7px 0 3px; }
.win { margin-left: 8px; }

/* menu bar */
.menubar { display: flex; align-items: center; height: 34px; padding-bottom: 6px; flex: none; }
.quick { flex: 0 0 37.5%; display: flex; align-items: center; padding-left: 14px; }
.file { gap: 2px; margin-right: 12px; }
.quick .vline { margin-right: 7px; }
.q { width: 26px; height: 24px; justify-content: center; }
.quick .vline:last-child { margin-left: 7px; }
.menu { display: flex; padding-right: 14px; }
.menu button { margin: 2px 15px 0; font-size: 13px; line-height: 22px; border-bottom: 2px solid transparent; }
.menu .on { color: #2159b0; font-weight: 700; border-color: #2159b0; }
.ai { gap: 5px; margin: 0 14px 0 10px; }
.right { margin-left: auto; display: flex; align-items: center; gap: 9px; padding-right: 13px; }
.share {
  display: flex;
  align-items: center;
  gap: 2px;
  height: 24px;
  width: 57px;
  padding-left: 6px;
  border-radius: 4px;
  background: #1f66d6;
  color: #fff;
}
.share svg { stroke: #fff; }

/* ribbon */
.ribbon {
  display: flex;
  height: 74px;
  margin: 0 13px;
  flex: none;
  background: #fff;
  border-radius: 8px;
  box-shadow: 0 1px 3px #8889;
  position: relative;
  z-index: 2;
}
.group { display: flex; position: relative; padding-top: 10px; }
.group + .group::before { content: ""; position: absolute; left: 0; top: 4px; bottom: 4px; width: 1px; background: #d4d4d4; }
.launch { position: absolute; right: 4px; bottom: 3px; width: 8px; height: 8px; stroke: #777; }
.rows { display: flex; flex-direction: column; gap: 4px; }
.row { display: flex; height: 24px; }
.ic { width: 28px; height: 24px; display: flex; align-items: center; justify-content: center; }
.dd { width: 40px; height: 24px; display: flex; align-items: center; padding-left: 4px; gap: 2px; }
.big { display: flex; flex-direction: column; align-items: center; gap: 7px; height: 54px; white-space: nowrap; }
.big .i8, .gap { margin-left: 2px; }
.w44 { width: 44px; margin-right: 2px; }
.w60 { width: 60px; }
.w68 { width: 68px; }
.clip { padding-left: 84px; width: 210px; }
.font { width: 342px; padding-left: 8px; }
.selects { display: flex; width: 195px; margin-right: 4px; border: 1px solid #bbb; border-radius: 4px; }
.pick { display: flex; align-items: center; position: relative; }
.pick select { appearance: none; border: 0; background: none; width: 100%; padding: 0 0 0 11px; }
.pick svg { position: absolute; right: 4px; }
.face { flex: 1; }
.size { width: 63px; border-left: 1px solid #bbb; }
.wen { width: 20px; font-size: 12px; line-height: 10px; text-align: center; }
.wen small { display: block; font-size: 10px; line-height: 8px; }
.ltr { font: 16px/20px "Open Sans", sans-serif; color: #333; }
.ltr > span { width: 20px; text-align: center; }
.b { font-weight: 700; font-size: 14px; }
.it { font-style: italic; font-family: "Liberation Serif", serif; }
.u { text-decoration: underline; }
.ltr .shade { background: #d6d6d6; width: 18px; line-height: 18px; font-size: 14px; }
.para { width: 292px; padding-left: 6px; }
.spread { width: 281px; padding-left: 2px; justify-content: space-between; }
.pressed { background: #e2e2e2; border-radius: 4px; }
.lead { margin-left: 4px; }
.row .vline { margin: 2px 7px; }
.styles { flex: 1; padding-left: 10px; max-width: 662px; }
.gallery { flex: 1; display: flex; height: 50px; border: 1px solid #bbb; border-radius: 6px; padding-left: 1px; }
.style { flex: 1; margin: 2px 1px; border: 3px solid transparent; font: 300 15px/20px "Liberation Serif", "Noto Sans CJK SC", serif; color: #000; white-space: nowrap; }
.sel { border-color: #ccc; border-radius: 4px; font-size: 14px; }
.h1 { font-size: 20px; font-weight: 400; }
.h2 { font-size: 16px; }
.h4 { font-weight: 700; }
.spin { width: 16px; display: flex; flex-direction: column; align-items: center; justify-content: space-between; padding: 6px 0 3px; }
.styles .big { margin: 0 8px 0 4px; }
.find { padding-left: 9px; width: 132px; }
.find .w68 { margin-right: 2px; }
.find .w44, .arrange .w44 { margin-right: 0; }
.arrange { padding-left: 8px; width: 107px; gap: 2px; }
.last { padding-left: 7px; }

/* document */
.canvas { flex: 1; min-height: 0; display: flex; overflow: hidden; }
.pages { flex: 1; display: flex; justify-content: center; gap: 20px; }
.page {
  position: relative;
  width: 792px;
  flex: none;
  min-height: 100%;
  padding: 11px 94px 0 112px;
  background: #fff;
  box-shadow: 0 0 3px #bbb;
  color: #000;
  font: 350 16px/20pt "Liberation Serif", "Noto Sans CJK SC", serif;
}
.page p { margin: 0; }
.page span { display: block; white-space: nowrap; text-align: justify; text-align-last: justify; font-feature-settings: "halt"; }
.page span:first-child { padding-left: 2em; }
.page .cont span:first-child { padding-left: 0; }
.page span:last-child { text-align-last: start; font-feature-settings: normal; }
.page span.fit { text-align-last: justify; font-feature-settings: "halt"; }
.page code { font: 13px "Liberation Mono", monospace; }
.page h1 { margin: 0 0 31px; font-size: 24px; line-height: 40px; font-weight: 400; text-align: center; }
.page h2 { margin: 0 0 5px; padding-left: 17px; font-size: 20px; line-height: 38px; font-weight: 400; }
.page h3 { margin: 0 0 5px; padding-left: 2em; font-size: 16px; line-height: 16px; font-weight: 350; }
.page .tight { line-height: 21px; margin-top: -4px; }
.corner { position: absolute; top: 0; width: 23px; height: 8px; border-bottom: 1px solid #999; }
.tl { left: 90px; border-right: 1px solid #999; }
.tr { right: 71px; border-left: 1px solid #999; }
.grip { position: absolute; left: 73px; top: 13px; width: 10px; height: 15px; background: radial-gradient(circle, #666 1px, transparent 2px) 0 0 / 5px 5px; }
.cursor { position: absolute; left: 112px; top: 13px; width: 2px; height: 20px; background: #000; }
.scroll { width: 16px; display: flex; flex-direction: column; align-items: center; gap: 6px; padding: 8px 0; }
.mark { width: 10px; height: 10px; fill: #666; stroke: #666; stroke-width: 1; }
.ring { fill: none; }
.thumb { width: 6px; height: 54px; margin-top: 84px; border-radius: 3px; background: #bdbdbd; }
.down { margin-top: auto; }

/* status bar */
.status { flex: none; height: 18px; overflow: hidden; display: flex; align-items: flex-start; padding-left: 16px; gap: 13px; border-top: 1px solid #bbb; background: #e3e3e3; }
.status .bare { height: 22px; }
.proof { margin-left: 6px; }
.views { margin-left: auto; display: flex; align-items: center; padding-right: 12px; }
.v { width: 24px; justify-content: center; margin: 0 4px; }
.cur { background: #c9c9c9; }
.views .vline { margin: 0 5px; }
.zoom { margin: 0 16px 0 12px; }
.zoom .gap { margin-left: 11px; }
.thick { stroke-width: 2; }
.slider { appearance: none; width: 106px; height: 10px; margin: 0 12px; background: linear-gradient(90deg, #2f5fa8 50%, #aaa 50%) center / 100% 2px no-repeat; }
.slider::-webkit-slider-thumb { appearance: none; width: 8px; height: 8px; border-radius: 50%; background: #777; border: 1px solid #fff; }

/* overlays */
.ime {
  position: absolute;
  right: 12px;
  bottom: 155px;
  z-index: 4;
  display: flex;
  align-items: center;
  justify-content: center;
  gap: 3px;
  width: 61px;
  height: 26px;
  border-radius: 5px;
  background: #000;
  box-shadow: 0 0 3px #555;
  color: #fff;
}
.ime svg { stroke: #fff; }
.ime b { font-weight: 400; color: #bbb; }
.wm { position: absolute; inset: 7px 0 18px; overflow: hidden; z-index: 3; pointer-events: none; font: 36px/126px "Open Sans", sans-serif; color: #00000026; }
.wm div { display: flex; margin-left: 3px; }
.wm div:nth-child(even) { margin-left: -130px; }
.wm span { flex: 0 0 265px; }
.notice { position: absolute; left: 50%; top: 486px; margin-left: -287px; z-index: 4; pointer-events: none; font: 46px/66px "Noto Sans CJK SC", sans-serif; font-feature-settings: "hwid"; color: #c80000; white-space: nowrap; }
```
